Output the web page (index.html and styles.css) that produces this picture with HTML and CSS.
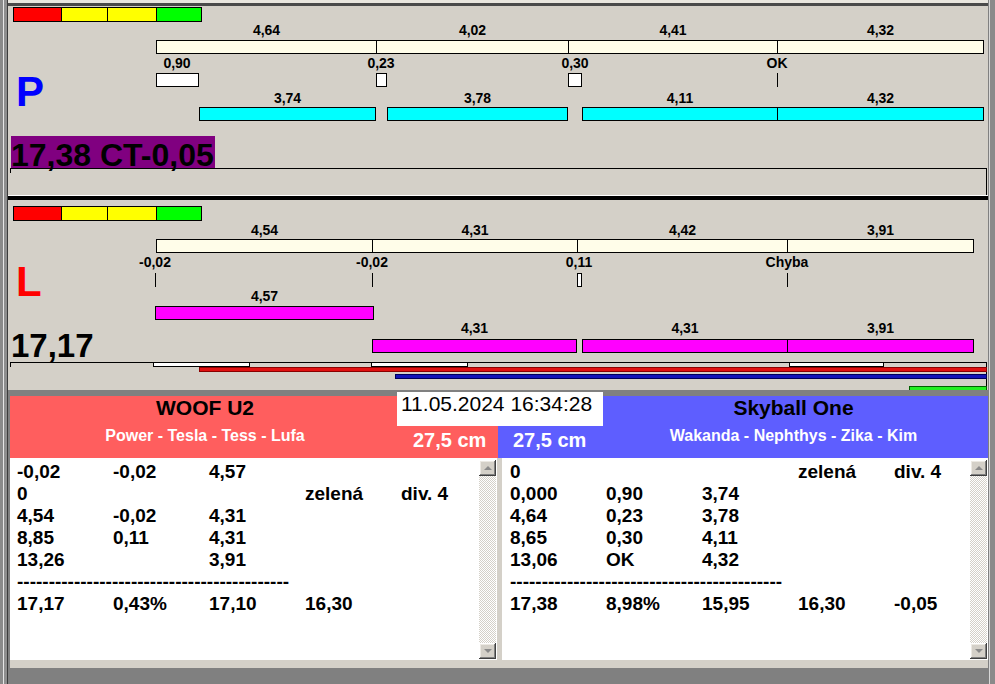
FILE: index.html
```html
<!DOCTYPE html>
<html lang="cs">
<head>
<meta charset="utf-8">
<title>Měření</title>
<link rel="stylesheet" href="styles.css">
</head>
<body>
<div class="app">
  <div class="topstrip"></div>

  <section class="panel panel-p">
    <div class="lights lights-p"><span class="l-red"></span><span class="l-y1"></span><span class="l-y2"></span><span class="l-grn"></span></div>
    <div class="body-row body-p">
      <div class="side">
        <div class="letter letter-p">P</div>
      </div>
      <div class="tracks">
        <div class="tr">
          <span class="lbl" style="left:6px;width:221px">4,64</span>
          <span class="lbl" style="left:226px;width:193px">4,02</span>
          <span class="lbl" style="left:418px;width:210px">4,41</span>
          <span class="lbl" style="left:627px;width:207px">4,32</span>
        </div>
        <div class="tr mt3">
          <span class="bar cream" style="left:6px;width:221px"></span>
          <span class="bar cream" style="left:226px;width:193px"></span>
          <span class="bar cream" style="left:418px;width:210px"></span>
          <span class="bar cream" style="left:627px;width:207px"></span>
        </div>
        <div class="tr mt2">
          <span class="lbl lbl-c" style="left:27px">0,90</span>
          <span class="lbl lbl-c" style="left:231px">0,23</span>
          <span class="lbl lbl-c" style="left:425px">0,30</span>
          <span class="lbl lbl-c" style="left:627px">OK</span>
        </div>
        <div class="tr mt3">
          <span class="bar box" style="left:6px;width:43px"></span>
          <span class="bar box" style="left:226px;width:11px"></span>
          <span class="bar box" style="left:418px;width:14px"></span>
          <span class="tick" style="left:627px"></span>
        </div>
        <div class="tr mt4">
          <span class="lbl" style="left:49px;width:177px">3,74</span>
          <span class="lbl" style="left:237px;width:181px">3,78</span>
          <span class="lbl" style="left:432px;width:196px">4,11</span>
          <span class="lbl" style="left:627px;width:207px">4,32</span>
        </div>
        <div class="tr mt2">
          <span class="bar cyan" style="left:49px;width:177px"></span>
          <span class="bar cyan" style="left:237px;width:181px"></span>
          <span class="bar cyan" style="left:432px;width:196px"></span>
          <span class="bar cyan" style="left:627px;width:207px"></span>
        </div>
      </div>
    </div>
    <div class="total-p">17,38 CT-0,05</div>
    <div class="frame frame-p"></div>
  </section>

  <div class="sep"></div>

  <section class="panel panel-l">
    <div class="lights lights-l"><span class="l-red"></span><span class="l-y1"></span><span class="l-y2"></span><span class="l-grn"></span></div>
    <div class="body-row body-l">
      <div class="side">
        <div class="letter letter-l">L</div>
        <div class="total-l">17,17</div>
      </div>
      <div class="tracks">
        <div class="tr">
          <span class="lbl" style="left:6px;width:217px">4,54</span>
          <span class="lbl" style="left:222px;width:206px">4,31</span>
          <span class="lbl" style="left:427px;width:211px">4,42</span>
          <span class="lbl" style="left:637px;width:187px">3,91</span>
        </div>
        <div class="tr mt2">
          <span class="bar cream" style="left:6px;width:217px"></span>
          <span class="bar cream" style="left:222px;width:206px"></span>
          <span class="bar cream" style="left:427px;width:211px"></span>
          <span class="bar cream" style="left:637px;width:187px"></span>
        </div>
        <div class="tr mt2">
          <span class="lbl lbl-c" style="left:5px">-0,02</span>
          <span class="lbl lbl-c" style="left:222px">-0,02</span>
          <span class="lbl lbl-c" style="left:429px">0,11</span>
          <span class="lbl lbl-c" style="left:637px">Chyba</span>
        </div>
        <div class="tr mt4">
          <span class="tick" style="left:5px"></span>
          <span class="tick" style="left:222px"></span>
          <span class="bar box" style="left:427px;width:5px"></span>
          <span class="tick" style="left:637px"></span>
        </div>
        <div class="tr mt2">
          <span class="lbl" style="left:5px;width:219px">4,57</span>
        </div>
        <div class="tr mt3">
          <span class="bar mag" style="left:5px;width:219px"></span>
        </div>
        <div class="tr mt1">
          <span class="lbl" style="left:222px;width:205px">4,31</span>
          <span class="lbl" style="left:432px;width:206px">4,31</span>
          <span class="lbl" style="left:637px;width:187px">3,91</span>
        </div>
        <div class="tr mt4">
          <span class="bar mag" style="left:222px;width:205px"></span>
          <span class="bar mag" style="left:432px;width:206px"></span>
          <span class="bar mag" style="left:637px;width:187px"></span>
        </div>
      </div>
    </div>
    <div class="frame frame-l">
      <span class="fbar fwhite" style="left:143px;width:97px"></span>
      <span class="fbar fwhite" style="left:361px;width:97px"></span>
      <span class="fbar fwhite" style="left:779px;width:95px"></span>
      <span class="fbar fred" style="left:189px;width:788px"></span>
      <span class="fbar fblue" style="left:385px;width:592px"></span>
      <span class="fbar fgreen" style="left:899px;width:78px"></span>
    </div>
  </section>

  <section class="bottom">
    <div class="col">
      <div class="hdr hdr-l">
        <div class="names">
          <div class="title">WOOF U2</div>
          <div class="sub">Power - Tesla - Tess - Lufa</div>
        </div>
        <div class="cm">27,5 cm</div>
      </div>
      <div class="list list-l">
        <div class="rows">
          <div class="row"><span>-0,02</span><span>-0,02</span><span>4,57</span><span></span><span></span></div>
          <div class="row"><span>0</span><span></span><span></span><span>zelená</span><span>div. 4</span></div>
          <div class="row"><span>4,54</span><span>-0,02</span><span>4,31</span><span></span><span></span></div>
          <div class="row"><span>8,85</span><span>0,11</span><span>4,31</span><span></span><span></span></div>
          <div class="row"><span>13,26</span><span></span><span>3,91</span><span></span><span></span></div>
          <div class="dash">-------------------------------------------</div>
          <div class="row"><span>17,17</span><span>0,43%</span><span>17,10</span><span>16,30</span><span></span></div>
        </div>
        <div class="scroll">
          <div class="sbtn"><span class="arrow-up"></span></div>
          <div class="track"></div>
          <div class="sbtn"><span class="arrow-down"></span></div>
        </div>
      </div>
    </div>
    <div class="col">
      <div class="hdr hdr-r">
        <div class="cm">27,5 cm</div>
        <div class="names">
          <div class="title">Skyball One</div>
          <div class="sub">Wakanda - Nephthys - Zika - Kim</div>
        </div>
      </div>
      <div class="list list-r">
        <div class="rows">
          <div class="row"><span>0</span><span></span><span></span><span>zelená</span><span>div. 4</span></div>
          <div class="row"><span>0,000</span><span>0,90</span><span>3,74</span><span></span><span></span></div>
          <div class="row"><span>4,64</span><span>0,23</span><span>3,78</span><span></span><span></span></div>
          <div class="row"><span>8,65</span><span>0,30</span><span>4,11</span><span></span><span></span></div>
          <div class="row"><span>13,06</span><span>OK</span><span>4,32</span><span></span><span></span></div>
          <div class="dash">-------------------------------------------</div>
          <div class="row"><span>17,38</span><span>8,98%</span><span>15,95</span><span>16,30</span><span>-0,05</span></div>
        </div>
        <div class="scroll">
          <div class="sbtn"><span class="arrow-up"></span></div>
          <div class="track"></div>
          <div class="sbtn"><span class="arrow-down"></span></div>
        </div>
      </div>
    </div>
    <div class="date">11.05.2024 16:34:28</div>
  </section>
</div>
</body>
</html>
```
FILE: styles.css
```css
* { box-sizing: border-box; }
html, body { margin: 0; padding: 0; }
body {
  width: 995px;
  height: 684px;
  overflow: hidden;
  background-color: #808080;
  background-image: linear-gradient(to right, #8a8a8a 0, #8a8a8a 3px, #e6e6e6 3px, #e6e6e6 4px, #8e8e8e 4px, #8e8e8e 7px, #3c3c3c 7px, #3c3c3c 8px, #808080 8px, #808080 989px, #d8d8d8 989px, #d8d8d8 990px, #8a8a8a 990px);
  font-family: "Liberation Sans", Arial, sans-serif;
  color: #000;
}

.topstrip {
  margin-left: 8px;
  width: 980px;
  height: 6px;
  background: #e9e6df;
  border-bottom: 3px solid #4a4a4a;
}

.panel {
  margin-left: 8px;
  width: 980px;
  background: #d4d0c8;
  overflow: hidden;
}
.panel-p { height: 189px; }
.panel-l { height: 190px; }

.sep {
  margin-left: 8px;
  width: 980px;
  height: 5px;
  background: #000;
  border-top: 1px solid #fff;
}

/* traffic light strip */
.lights {
  display: flex;
  width: 189px;
  height: 15px;
  margin-left: 5px;
  border: 1px solid #000;
}
.lights-p { margin-top: 1px; }
.lights-l { margin-top: 6px; }
.lights span { display: block; height: 100%; }
.l-red { width: 48px; background: #ff0000; border-right: 1px solid #000; }
.l-y1 { width: 46px; background: #ffff00; border-right: 1px solid #000; }
.l-y2 { width: 49px; background: #ffff00; border-right: 1px solid #000; }
.l-grn { flex: 1; background: #00ff00; }

.body-row { display: flex; }
.body-p { margin-top: 1px; }
.body-l { margin-top: 2px; }

.side { width: 142px; flex: none; }
.tracks { width: 838px; flex: none; }

.tr { position: relative; height: 14px; }
.mt1 { margin-top: 1px; }
.mt2 { margin-top: 2px; }
.mt3 { margin-top: 3px; }
.mt4 { margin-top: 4px; }

.lbl {
  position: absolute;
  top: 0;
  font-size: 14px;
  font-weight: bold;
  line-height: 14px;
  text-align: center;
  white-space: nowrap;
}
.lbl-c { width: 60px; margin-left: -30px; }

.bar {
  position: absolute;
  top: 0;
  height: 14px;
  border: 1px solid #000;
}
.cream { background: #fffde9; }
.cyan { background: #00ffff; }
.mag { background: #ff00ff; }
.box { background: #ffffff; }

.tick {
  position: absolute;
  top: 0;
  width: 1px;
  height: 14px;
  background: #000;
}

.letter {
  font-size: 42px;
  font-weight: bold;
  line-height: 42px;
  margin-left: 8px;
}
.letter-p { color: #0000ff; margin-top: 48px; }
.letter-l { color: #ff0000; margin-top: 38px; }

.total-p {
  width: fit-content;
  height: 32px;
  margin: 15px 0 0 3px;
  padding: 3px 1px 0 0;
  background: #800080;
  font-size: 32px;
  font-weight: bold;
  line-height: 32px;
  white-space: nowrap;
}
.total-l {
  height: 32px;
  margin: 27px 0 0 3px;
  font-size: 33px;
  font-weight: bold;
  line-height: 32px;
  white-space: nowrap;
}

.frame {
  position: relative;
  margin-left: 2px;
  width: 977px;
  border-top: 1px solid #000;
  border-right: 1px solid #000;
}
.frame::before {
  content: "";
  position: absolute;
  left: 0;
  top: 0;
  width: 1px;
  height: 4px;
  background: #000;
}
.frame-p { height: 27px; }
.frame-l { height: 28px; }

.fbar { position: absolute; height: 5px; }
.fwhite { top: -1px; background: #fff; border: 1px solid #000; }
.fred { top: 4px; background: #e01010; border: 1px solid #8a0000; }
.fblue { top: 11px; background: #1414b8; border: 1px solid #00005a; }
.fgreen { top: 23px; background: #22ee22; border: 1px solid #006000; }

/* bottom section */
.bottom {
  position: relative;
  margin: 6px 0 0 10px;
  width: 978px;
  display: grid;
  grid-template-columns: 488px 490px;
  background: #d4d0c8;
  padding-bottom: 8px;
}

.hdr {
  height: 62px;
  display: flex;
  align-items: flex-start;
}
.hdr-l { background: #ff5e5e; }
.hdr-r { background: #5e5eff; }

.names { text-align: center; flex: none; }
.hdr-l .names { width: 390px; }
.hdr-r .names { width: 389px; }

.title {
  font-size: 21px;
  font-weight: bold;
  line-height: 24px;
  color: #000;
  white-space: nowrap;
}
.sub {
  margin-top: 6px;
  font-size: 16px;
  font-weight: bold;
  line-height: 20px;
  color: #fff;
  white-space: nowrap;
}
.cm {
  margin-top: 32px;
  font-size: 20px;
  font-weight: bold;
  line-height: 24px;
  color: #fff;
  white-space: nowrap;
}
.hdr-l .cm { margin-left: 13px; }
.hdr-r .cm { width: 101px; padding-left: 15px; flex: none; }

.list {
  height: 202px;
  background: #fff;
  display: flex;
}
.list-l { width: 487px; }
.list-r { width: 486px; margin-left: 4px; }

.rows {
  flex: 1 1 0;
  min-width: 0;
  overflow: hidden;
  padding: 3px 0 0 7px;
  font-size: 19px;
  font-weight: bold;
  line-height: 22px;
}
.list-r .rows { padding-left: 8px; }
.row {
  display: grid;
  grid-template-columns: repeat(5, 96px);
  height: 22px;
  white-space: nowrap;
}
.dash { height: 22px; white-space: nowrap; }

.scroll {
  width: 17px;
  flex: none;
  display: flex;
  flex-direction: column;
  margin: 2px 1px 1px 0;
  background: repeating-conic-gradient(#d4d0c8 0 25%, #ffffff 0 50%) 0 0 / 2px 2px;
}
.track { flex: 1; }
.sbtn {
  height: 16px;
  display: flex;
  align-items: center;
  justify-content: center;
  background: #d4d0c8;
  box-shadow: inset -1px -1px #404040, inset 1px 1px #ffffff, inset -2px -2px #808080, inset 2px 2px #ece9e3;
}
.arrow-up {
  width: 0;
  height: 0;
  border-left: 4px solid transparent;
  border-right: 4px solid transparent;
  border-bottom: 4px solid #8a8a8a;
}
.arrow-down {
  width: 0;
  height: 0;
  border-left: 4px solid transparent;
  border-right: 4px solid transparent;
  border-top: 4px solid #8a8a8a;
}

.date {
  position: absolute;
  left: 387px;
  top: -4px;
  width: 206px;
  height: 34px;
  padding-left: 4px;
  background: #fff;
  font-size: 21px;
  line-height: 24px;
  white-space: nowrap;
}
```
